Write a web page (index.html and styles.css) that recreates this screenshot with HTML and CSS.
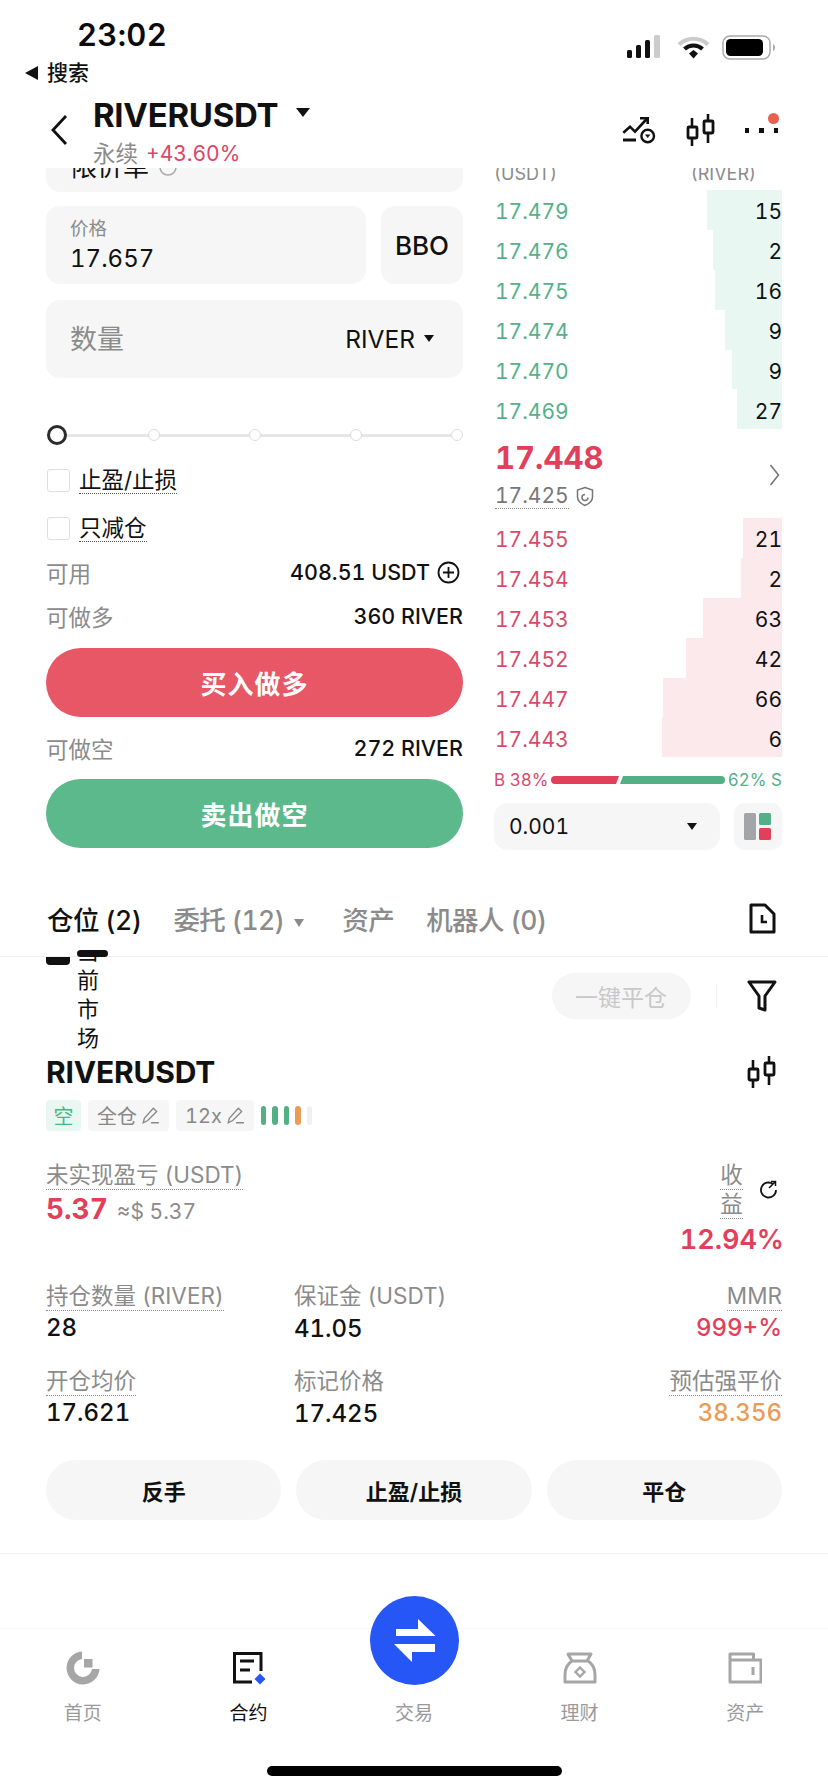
FILE: index.html
```html
<!DOCTYPE html>
<html lang="zh">
<head>
<meta charset="utf-8">
<title>RIVERUSDT</title>
<link rel="stylesheet" href="styles.css">
</head>
<body>
<div class="page">
  <header class="status">
    <div class="status-left">
      <div class="time">23:02</div>
      <div class="back-app"><span class="tri-left"></span>搜索</div>
    </div>
    <div class="status-right">
      <svg class="ic-signal" width="34" height="24" viewBox="0 0 34 24"><rect x="0" y="15" width="5" height="8" rx="1.5" fill="#111"/><rect x="9" y="10" width="5" height="13" rx="1.5" fill="#111"/><rect x="18" y="5" width="5" height="18" rx="1.5" fill="#111"/><rect x="27" y="0" width="6" height="23" rx="1.5" fill="#ccc"/></svg>
      <svg class="ic-wifi" width="33" height="24" viewBox="0 0 33 24"><path d="M2 9.5a21 21 0 0 1 29 0" fill="none" stroke="#ccc" stroke-width="4"/><path d="M7.500 14a13.500 13.500 0 0 1 18 0" fill="none" stroke="#111" stroke-width="4"/><path d="M12 18.500l4.500-3.500 4.500 3.500-4.500 5z" fill="#111"/></svg>
      <svg class="ic-batt" width="54" height="25" viewBox="0 0 54 25"><rect x="1" y="1" width="47" height="23" rx="7" fill="#fff" stroke="#aaa" stroke-width="1.500"/><rect x="4" y="4" width="37" height="17" rx="4.500" fill="#000"/><path d="M51 9a4 4 0 0 1 0 7z" fill="#aaa"/></svg>
    </div>
  </header>

  <div class="head">
    <svg class="ic-back" width="18" height="32" viewBox="0 0 18 32"><path d="M16 2L3 16l13 14" fill="none" stroke="#111" stroke-width="2.800"/></svg>
    <div class="head-title">
      <div class="symbol-line"><span class="symbol">RIVERUSDT</span><span class="caret caret-lg"></span></div>
      <div class="sub-line"><span class="perp">永续</span><span class="chg">+43.60%</span></div>
    </div>
    <div class="head-actions">
      <svg width="34" height="28" viewBox="0 0 34 28"><path d="M1.300 16.700L8 10.700l5 5L24.700 3" fill="none" stroke="#111" stroke-width="2.600"/><path d="M18 2.300h7.700V8" fill="none" stroke="#111" stroke-width="2.600"/><path d="M1 24h13" stroke="#111" stroke-width="3"/><circle cx="25.700" cy="20" r="6.300" fill="#fff" stroke="#111" stroke-width="2.400"/><path d="M23 18.500h5.400L25.700 22z" fill="#111"/></svg>
      <svg class="ic-candle" width="30" height="32" viewBox="0 0 30 32"><use href="#candle"/></svg>
      <div class="more"><i></i><i></i><i></i><b></b></div>
    </div>
  </div>

  <main class="trade">
    <section class="form">
      <div class="order-type"><div class="order-type-inner"><span>限价单</span><svg width="18" height="18" viewBox="0 0 18 18"><circle cx="9" cy="9" r="8" fill="none" stroke="#aaa" stroke-width="1.500"/></svg></div></div>
      <div class="price-row">
        <div class="field field-price"><span class="field-label">价格</span><span class="field-value">17.657</span></div>
        <div class="field-bbo">BBO</div>
      </div>
      <div class="field-qty"><span class="qty-label">数量</span><span class="qty-unit">RIVER<span class="caret caret-sm"></span></span></div>
      <div class="slider"><i class="knob"></i><i class="tick"></i><i class="tick"></i><i class="tick"></i><i class="tick"></i></div>
      <label class="check check-first"><i class="box"></i><span class="dotted">止盈/止损</span></label>
      <label class="check"><i class="box"></i><span class="dotted">只减仓</span></label>
      <div class="kv kv-avail"><span class="k">可用</span><span class="v">408.51 USDT<svg class="ic-plus" width="23" height="23" viewBox="0 0 23 23"><circle cx="11.500" cy="11.500" r="10" fill="none" stroke="#111" stroke-width="1.800"/><path d="M6 11.500h11M11.500 6v11" stroke="#111" stroke-width="1.800"/></svg></span></div>
      <div class="kv kv-max"><span class="k">可做多</span><span class="v">360 RIVER</span></div>
      <button class="cta cta-buy">买入做多</button>
      <div class="kv kv-short"><span class="k">可做空</span><span class="v">272 RIVER</span></div>
      <button class="cta cta-sell">卖出做空</button>
    </section>

    <section class="book">
      <div class="book-head"><div class="book-head-inner"><span>(USDT)</span><span>(RIVER)</span></div></div>
      <div class="rows">
        <div class="row ask"><i class="depth" style="width:75px"></i><span class="p">17.479</span><span class="q">15</span></div>
        <div class="row ask"><i class="depth" style="width:69px"></i><span class="p">17.476</span><span class="q">2</span></div>
        <div class="row ask"><i class="depth" style="width:67px"></i><span class="p">17.475</span><span class="q">16</span></div>
        <div class="row ask"><i class="depth" style="width:57px"></i><span class="p">17.474</span><span class="q">9</span></div>
        <div class="row ask"><i class="depth" style="width:50px"></i><span class="p">17.470</span><span class="q">9</span></div>
        <div class="row ask"><i class="depth" style="width:45px"></i><span class="p">17.469</span><span class="q">27</span></div>
      </div>
      <div class="mid">
        <div class="mid-text">
          <div class="last">17.448</div>
          <div class="mark"><span class="dotted dotted-gray">17.425</span><svg width="18" height="21" viewBox="0 0 18 21"><path d="M9 1.500l7.500 2.500v7c0 4-3 6.500-7.500 8.500C4.500 17.500 1.500 15 1.500 11V4z" fill="none" stroke="#777" stroke-width="1.500"/><path d="M12 11.500a3 3 0 1 1-3-3" fill="none" stroke="#777" stroke-width="1.500"/></svg></div>
        </div>
        <svg class="mid-arrow" width="11" height="24" viewBox="0 0 11 24"><path d="M1.500 2l8 10-8 10" fill="none" stroke="#777" stroke-width="1.600"/></svg>
      </div>
      <div class="rows">
        <div class="row bid"><i class="depth" style="width:39px"></i><span class="p">17.455</span><span class="q">21</span></div>
        <div class="row bid"><i class="depth" style="width:41px"></i><span class="p">17.454</span><span class="q">2</span></div>
        <div class="row bid"><i class="depth" style="width:79px"></i><span class="p">17.453</span><span class="q">63</span></div>
        <div class="row bid"><i class="depth" style="width:96px"></i><span class="p">17.452</span><span class="q">42</span></div>
        <div class="row bid"><i class="depth" style="width:119px"></i><span class="p">17.447</span><span class="q">66</span></div>
        <div class="row bid"><i class="depth" style="width:120px"></i><span class="p">17.443</span><span class="q">6</span></div>
      </div>
      <div class="ratio">
        <span class="r-red">B 38%</span>
        <svg width="174" height="8" viewBox="0 0 174 8"><path d="M4 0h64l-3 8H4a4 4 0 0 1 0-8z" fill="#e2405a"/><path d="M72 0h98a4 4 0 0 1 0 8H69z" fill="#53b084"/></svg>
        <span class="r-green">62% S</span>
      </div>
      <div class="book-ctrl">
        <div class="tick-select"><span>0.001</span><span class="caret caret-sm"></span></div>
        <div class="layout-btn"><svg width="28" height="27" viewBox="0 0 28 27"><rect x="0" y="0" width="12" height="27" rx="1.500" fill="#a3a5a8"/><rect x="15" y="0" width="12" height="12" rx="1.500" fill="#53b084"/><rect x="15" y="15" width="12" height="12" rx="1.500" fill="#e2405a"/></svg></div>
      </div>
    </section>
  </main>

  <nav class="tabs">
    <span class="tab tab-on">仓位 (2)</span>
    <span class="tab">委托 (12)<span class="caret caret-gray"></span></span>
    <span class="tab">资产</span>
    <span class="tab">机器人 (0)</span>
    <svg class="ic-doc" width="27" height="31" viewBox="0 0 27 31"><path d="M2 2h14l9 9v18H2z" fill="none" stroke="#111" stroke-width="3" stroke-linejoin="round"/><path d="M13 12v7h5" fill="none" stroke="#111" stroke-width="2.600"/></svg>
  </nav>

  <section class="pos">
    <div class="pos-top">
      <div class="scope"><i class="scope-box"></i><div class="scope-text">当前市场<i class="scope-bar"></i></div></div>
      <span class="close-all">一键平仓</span>
      <i class="vsep"></i>
      <svg width="30" height="32" viewBox="0 0 30 32"><path d="M2 2h26L18 16v14l-6-2V16z" fill="none" stroke="#111" stroke-width="3" stroke-linejoin="round"/></svg>
    </div>
    <div class="pos-symbol"><span>RIVERUSDT</span><svg width="30" height="32" viewBox="0 0 30 32"><use href="#candle"/></svg></div>
    <div class="tags">
      <span class="tag tag-short">空</span>
      <span class="tag">全仓<svg width="19" height="19" viewBox="0 0 17 17"><path d="M2 15l1-4L11 2l3 3-8 8zM9 15h7" fill="none" stroke="#888" stroke-width="1.200"/></svg></span>
      <span class="tag">12x<svg width="19" height="19" viewBox="0 0 17 17"><path d="M2 15l1-4L11 2l3 3-8 8zM9 15h7" fill="none" stroke="#888" stroke-width="1.200"/></svg></span>
      <span class="adl"><i></i><i></i><i></i><i class="o"></i><i class="e"></i></span>
    </div>
    <div class="pnl">
      <div>
        <div><span class="dotted dotted-gray lbl">未实现盈亏 (USDT)</span></div>
        <div class="pnl-val"><b>5.37</b><span>≈$ 5.37</span></div>
      </div>
      <div class="roe">
        <div class="roe-head"><span class="roe-label"><span class="dotted dotted-gray lbl">收</span><span class="dotted dotted-gray lbl">益</span></span><svg width="18" height="20" viewBox="0 0 18 20"><path d="M13 4a7.500 7.500 0 1 0 3 6" fill="none" stroke="#111" stroke-width="1.800"/><path d="M9 8l6-6M11 1.500h4.500V6" fill="none" stroke="#111" stroke-width="1.500"/></svg></div>
        <div class="roe-val">12.94%</div>
      </div>
    </div>
    <div class="stats">
      <div class="stat"><span class="dotted dotted-gray lbl">持仓数量 (RIVER)</span><b>28</b></div>
      <div class="stat"><span class="lbl lbl-plain">保证金 (USDT)</span><b>41.05</b></div>
      <div class="stat stat-r"><span class="dotted dotted-gray lbl">MMR</span><b class="red">999+%</b></div>
      <div class="stat"><span class="dotted dotted-gray lbl">开仓均价</span><b>17.621</b></div>
      <div class="stat"><span class="lbl lbl-plain">标记价格</span><b>17.425</b></div>
      <div class="stat stat-r"><span class="dotted dotted-gray lbl">预估强平价</span><b class="orange">38.356</b></div>
    </div>
    <div class="pos-btns"><button>反手</button><button>止盈/止损</button><button>平仓</button></div>
  </section>

  <footer class="tabbar">
    <a class="nav"><svg width="34" height="34" viewBox="0 0 34 34"><path d="M16 .5A16.500 16.500 0 1 0 33.500 18H26A9 9 0 1 1 16 8z" fill="#a6a6a6"/><rect x="18" y="8" width="8.500" height="8.500" fill="#a6a6a6"/></svg><span>首页</span></a>
    <a class="nav nav-on"><svg width="34" height="34" viewBox="0 0 34 34"><path d="M30 20V2.500H3.500V31H21" fill="none" stroke="#111" stroke-width="3"/><path d="M9 10h14M9 19h10" stroke="#111" stroke-width="3"/><path d="M29 22.500l5.500 5.500-5.500 5.500-5.500-5.500z" fill="#2656f5"/></svg><span>合约</span></a>
    <a class="nav nav-fab"><span class="fab"><svg width="44" height="45" viewBox="0 0 44 45"><path d="M3 11h22V1l17.500 17H3zM1 26h41v8H19v10z" fill="#fff"/></svg></span><span>交易</span></a>
    <a class="nav"><svg width="34" height="34" viewBox="0 0 34 34"><path d="M5 3h23l-4 7H9z" fill="none" stroke="#a6a6a6" stroke-width="3" stroke-linejoin="round"/><path d="M9 10C4 13 2 18 2 24v7h30v-7c0-6-2-11-7-14" fill="none" stroke="#a6a6a6" stroke-width="3" stroke-linejoin="round"/><path d="M17 16.500l4.500 4.500-4.500 4.500-4.500-4.500z" fill="none" stroke="#a6a6a6" stroke-width="2.400"/></svg><span>理财</span></a>
    <a class="nav"><svg width="34" height="34" viewBox="0 0 34 34"><path d="M2 31V3h23.500v6H33v22zM2 9h23.500" fill="none" stroke="#a6a6a6" stroke-width="3" stroke-linejoin="round"/><path d="M25 16v8" stroke="#a6a6a6" stroke-width="3"/></svg><span>资产</span></a>
    <i class="home-bar"></i>
  </footer>
</div>
<svg class="defs" width="0" height="0"><defs><g id="candle"><path d="M6 4v28M22 0v29" stroke="#111" stroke-width="2.600"/><rect x="2" y="13" width="9" height="11" rx="1" fill="#fff" stroke="#111" stroke-width="2.800"/><rect x="18" y="7" width="9" height="12" rx="1" fill="#fff" stroke="#111" stroke-width="2.800"/></g></defs></svg>
</body>
</html>
```
FILE: styles.css
```css
* { box-sizing: border-box; }
html, body { margin: 0; padding: 0; background: #fff; }
body { font-family: Inter, "Noto Sans CJK SC", "Liberation Sans", sans-serif; color: #111; font-variant-numeric: tabular-nums; }
i { display: block; font-style: normal; }
button { font-family: inherit; border: 0; padding: 0; }
.defs { position: absolute; }
.page { width: 828px; height: 1792px; overflow: hidden; display: flex; flex-direction: column; position: relative; background: #fff; }

.status { height: 90px; flex: none; display: flex; justify-content: space-between; padding: 0 52px 0 25px; }
.time { font-size: 31px; font-weight: 600; line-height: 36px; margin: 17px 0 0 52px; letter-spacing: .3px; color: #0b0b0b; }
.back-app { display: flex; align-items: center; gap: 9px; font-size: 21px; line-height: 28px; margin-top: 6px; font-weight: 500; }
.tri-left { width: 0; height: 0; border: 7px solid transparent; border-left: 0; border-right: 13px solid #111; }
.status-right { display: flex; align-items: flex-start; gap: 15px; padding-top: 35px; }
.ic-wifi { margin-left: 1px; }
.ic-batt { margin-left: -3px; }

.head { height: 78px; flex: none; display: flex; padding: 0 50px; position: relative; z-index: 2; }
.ic-back { margin-top: 24px; }
.head-title { margin-left: 25px; }
.symbol-line { display: flex; align-items: center; height: 36px; margin-top: 7px; }
.symbol { font-size: 33px; font-weight: 700; letter-spacing: -.3px; line-height: 36px; }
.caret { display: inline-block; width: 0; height: 0; border-style: solid; border-color: #111 transparent transparent; }
.caret-lg { border-width: 9px 7px 0; margin-left: 18px; margin-top: -6px; }
.caret-sm { border-width: 7px 5px 0; }
.caret-gray { border-width: 8px 5.500px 0; border-top-color: #8b8b8b; margin: 0 6px 0 10px; vertical-align: 3px; }
.sub-line { display: flex; gap: 8px; align-items: center; line-height: 28px; margin-top: 7px; }
.perp { font-size: 22.500px; color: #8b8b8b; }
.chg { font-size: 21px; color: #dc4468; }
.head-actions { margin-left: auto; display: flex; gap: 30px; margin-top: 26px; height: 32px; align-items: flex-start; }
.ic-candle { margin-top: -2px; }
.more { width: 34px; height: 30px; display: flex; gap: 10px; padding: 11.500px 0 0 1px; position: relative; margin-left: -2px; }
.more i { width: 5px; height: 5px; background: #111; }
.more b { position: absolute; right: -.500px; top: -3.500px; width: 11px; height: 11px; border-radius: 50%; background: #e8604f; }

.trade { height: 712px; flex: none; display: grid; grid-template-columns: 417px 288px; column-gap: 31px; padding: 0 46px; }
.form { display: flex; flex-direction: column; }
.order-type { height: 24px; background: #f6f6f6; border-radius: 0 0 14px 14px; overflow: hidden; }
.order-type-inner { margin-top: -14px; padding-left: 25px; display: flex; align-items: center; gap: 10px; font-size: 26px; line-height: 26px; }
.price-row { display: flex; gap: 15px; margin-top: 14px; }
.field { height: 78px; background: #f6f6f6; border-radius: 14px; }
.field-price { flex: 1; padding: 10px 24px; display: flex; flex-direction: column; }
.field-label { font-size: 18.500px; line-height: 24px; color: #8b8b8b; }
.field-value { font-size: 24px; line-height: 30px; margin-top: 4px; }
.field-bbo { width: 82px; height: 78px; background: #f6f6f6; border-radius: 14px; display: flex; align-items: center; justify-content: center; font-size: 26px; font-weight: 500; }
.field-qty { height: 78px; margin-top: 16px; background: #f6f6f6; border-radius: 14px; display: flex; align-items: center; justify-content: space-between; padding: 0 29px 0 24px; }
.qty-label { font-size: 27px; color: #8b8b8b; padding-bottom: 4px; }
.qty-unit { font-size: 24.500px; display: flex; align-items: center; gap: 9px; padding-bottom: 1px; }
.slider { height: 20px; margin-top: 47px; display: flex; align-items: center; justify-content: space-between; position: relative; padding-left: 1px; }
.slider::before { content: ""; position: absolute; left: 10px; right: 4px; top: 8.500px; height: 3px; background: #e6e6e6; }
.knob { width: 20px; height: 20px; border-radius: 50%; border: 3.500px solid #2b2b2b; background: #fff; position: relative; margin-right: -8px; }
.tick { width: 12px; height: 12px; border-radius: 50%; border: 1.500px solid #dcdcdc; background: #fff; position: relative; }
.check { display: flex; align-items: center; gap: 9px; height: 32px; font-size: 22.500px; }
.check-first { margin-top: 19px; }
.check + .check { margin-top: 16px; }
.box { width: 23px; height: 23px; border: 1.500px solid #dedede; border-radius: 3px; margin-left: 1px; }
.dotted { border-bottom: 1.500px dotted #555; line-height: 27px; display: inline-block; }
.dotted-gray { border-bottom-color: #8b8b8b; }
.kv { display: flex; justify-content: space-between; align-items: center; height: 32px; }
.kv-avail { margin-top: 12px; }
.kv-max { margin-top: 12px; }
.kv-short { margin-top: 15px; }
.k { font-size: 22.500px; color: #8b8b8b; }
.v { font-size: 21.500px; font-weight: 500; display: flex; align-items: center; }
.ic-plus { margin: 0 3px 0 7px; }
.cta { height: 69px; border-radius: 35px; color: #fff; font-size: 26px; font-weight: 700; flex: none; letter-spacing: 1px; }
.cta-buy { background: #e85766; margin-top: 16px; }
.cta-sell { background: #5bb98b; margin-top: 15px; }

.book { display: flex; flex-direction: column; }
.book-head { height: 22px; overflow: hidden; }
.book-head-inner { display: flex; justify-content: space-between; padding: 0 26px 0 0; margin-top: -6px; font-size: 18px; line-height: 24px; color: #8b8b8b; }
.rows { display: flex; flex-direction: column; }
.row { height: 39.900px; position: relative; display: flex; justify-content: space-between; align-items: center; padding: 4px 0 0 1px; font-size: 21px; }
.depth { position: absolute; right: 0; top: 0; bottom: 0; }
.p, .q { position: relative; }
.q { color: #111; }
.ask .p { color: #54b08a; }
.ask .depth { background: #e8f7f2; }
.bid .p { color: #d94a6c; }
.bid .depth { background: #fbe9ec; }
.mid { height: 88.600px; display: flex; justify-content: space-between; align-items: flex-start; }
.mid-text { padding: 9px 0 0 1px; }
.last { font-size: 31px; font-weight: 700; color: #e2405a; line-height: 40px; }
.mark { display: flex; align-items: center; gap: 7px; font-size: 21px; color: #777; margin-top: 5px; }
.mark .dotted { line-height: 25px; }
.mid-arrow { margin: 34px 2px 0 0; }
.ratio { display: flex; align-items: center; justify-content: space-between; height: 24px; margin-top: 11px; font-size: 17px; white-space: nowrap; }
.ratio svg { flex: none; }
.r-red { color: #d94a6c; }
.r-green { color: #54b08a; }
.book-ctrl { display: flex; gap: 14px; margin-top: 11px; }
.tick-select { width: 226px; height: 47px; background: #f6f6f6; border-radius: 14px; display: flex; align-items: center; justify-content: space-between; padding: 0 23px 0 15px; font-size: 21px; }
.layout-btn { width: 48px; height: 47px; background: #f6f6f6; border-radius: 10px; display: flex; align-items: center; justify-content: center; }

.tabs { height: 77px; flex: none; display: flex; align-items: center; gap: 32px; padding: 0 52px 0 47px; position: relative; z-index: 1; background: #fff; border-bottom: 1.500px solid #f0f0f0; }
.tab { font-size: 26.500px; color: #8b8b8b; white-space: nowrap; font-weight: 500; letter-spacing: -.6px; }
.tab-on { color: #111; }
.ic-doc { margin-left: auto; }

.pos { flex: 1; padding: 0 46px; position: relative; }
.pos-top { height: 97px; display: flex; align-items: center; justify-content: flex-end; padding: 0 5px 20px 0; position: relative; }
.scope { position: absolute; left: 0; top: 0; }
.scope-box { position: absolute; left: 0; top: 0; width: 24px; height: 8px; background: #111; border-radius: 0 0 4px 4px; }
.scope-text { position: absolute; left: 31px; top: -20px; width: 22px; font-size: 22px; line-height: 29px; }
.scope-bar { position: absolute; left: 0; top: 13px; width: 31px; height: 7px; background: #111; border-radius: 4px; z-index: 3; }
.close-all { width: 139px; height: 46px; border-radius: 23px; background: #f6f6f6; color: #c8c8c8; font-size: 23px; display: flex; align-items: center; justify-content: center; }
.vsep { width: 1.500px; height: 24px; background: #eee; margin: 0 30px 0 25px; }
.pos-symbol { display: flex; justify-content: space-between; align-items: center; height: 36px; font-size: 30px; font-weight: 700; letter-spacing: -.2px; padding-right: 5px; }
.tags { display: flex; align-items: center; gap: 7px; margin-top: 10px; height: 31px; }
.tag { height: 31px; padding: 0 9px; background: #f6f6f6; border-radius: 4px; display: flex; align-items: center; gap: 4px; font-size: 20px; color: #888; }
.tag-short { background: #e8f7f2; color: #4fb486; width: 35px; justify-content: center; padding: 0; }
.adl { display: flex; gap: 6px; }
.adl i { width: 5.500px; height: 19px; border-radius: 3px; background: #53b084; }
.adl .o { background: #ea9c56; }
.adl .e { background: #f0f0f0; }
.lbl { font-size: 22.500px; color: #8b8b8b; line-height: 28px; }
.lbl-plain { display: inline-block; padding-bottom: 1.500px; }
.pnl { display: flex; justify-content: space-between; margin-top: 30px; }
.pnl-val { display: flex; align-items: baseline; gap: 9px; margin-top: 2px; line-height: 34px; }
.pnl-val b { font-size: 28px; font-weight: 700; color: #e2405a; }
.pnl-val span { font-size: 21px; color: #8b8b8b; }
.roe { display: flex; flex-direction: column; align-items: flex-end; }
.roe-head { display: flex; align-items: center; gap: 17px; padding-right: 4px; }
.roe-label { display: flex; flex-direction: column; align-items: center; width: 23px; }
.roe-label .lbl { line-height: 28px; }
.roe-val { font-size: 27px; font-weight: 600; color: #e2405a; line-height: 34px; margin: 4px -2px 0 0; }
.stats { display: grid; grid-template-columns: 248px 1fr auto; row-gap: 22.500px; margin-top: 25px; }
.stat { display: flex; flex-direction: column; align-items: flex-start; }
.stat b { font-size: 24px; font-weight: 500; line-height: 32px; margin-top: 1px; }
.stat-r { align-items: flex-end; }
.stat b.red { color: #e2405a; }
.stat b.orange { color: #ea9c56; }
.pos-btns { display: flex; gap: 15px; margin: 30px -46px 0; padding: 0 46px 33px; border-bottom: 1.500px solid #f0f0f0; }
.pos-btns button { flex: 1; height: 60px; border-radius: 30px; background: #f6f6f6; font-size: 22px; font-weight: 600; color: #111; }

.tabbar { height: 164px; flex: none; display: flex; justify-content: space-between; padding: 21.500px 0 0 0; position: relative; border-top: 1.500px solid #f8f8f8; }
.nav { width: 165.600px; display: flex; flex-direction: column; align-items: center; gap: 15px; color: #9a9a9a; font-size: 19px; line-height: 28px; }
.nav-on { color: #111; }
.nav-fab { padding-top: 49px; }
.fab { position: absolute; top: -33px; left: 370px; width: 89px; height: 89px; border-radius: 50%; background: #2656f5; display: flex; align-items: center; justify-content: center; }
.home-bar { position: absolute; left: 267px; bottom: 16px; width: 295px; height: 10px; border-radius: 5px; background: #000; }
```
